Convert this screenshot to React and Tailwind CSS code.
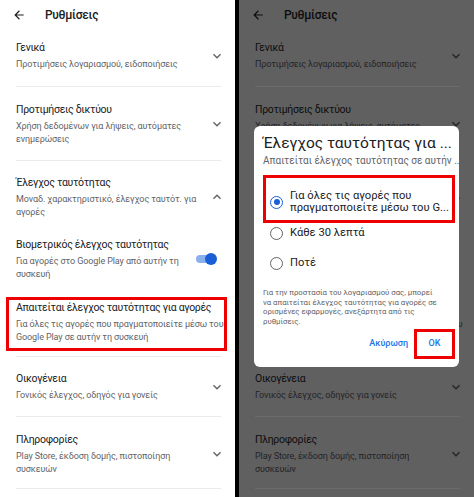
import React from "react";

const items = [
  { title: "Γενικά", sub: "Προτιμήσεις λογαριασμού, ειδοποιήσεις", icon: "down", pt: "pt-[10px]", pb: "pb-[15px]", divider: true },
  { title: "Προτιμήσεις δικτύου", sub: "Χρήση δεδομένων για λήψεις, αυτόματες ενημερώσεις", icon: "down", pt: "pt-[15px]", pb: "pb-[14px]", divider: true },
  { title: "Έλεγχος ταυτότητας", sub: "Μοναδ. χαρακτηριστικό, έλεγχος ταυτότ. για αγορές", icon: "up", pt: "pt-[14px]", pb: "pb-[18px]" },
  { title: "Βιομετρικός έλεγχος ταυτότητας", sub: "Για αγορές στο Google Play από αυτήν τη συσκευή", icon: "toggle", pt: "pt-0", pb: "pb-[19px]" },
  { title: "Απαιτείται έλεγχος ταυτότητας για αγορές", sub: "Για όλες τις αγορές που πραγματοποιείτε μέσω του Google Play σε αυτήν τη συσκευή", icon: null, pt: "pt-0", pb: "pb-[12px]", divider: true, marked: true },
  { title: "Οικογένεια", sub: "Γονικός έλεγχος, οδηγός για γονείς", icon: "down", pt: "pt-[14px]", pb: "pb-[14px]", divider: true },
  { title: "Πληροφορίες", sub: "Play Store, έκδοση δομής, πιστοποίηση συσκευών", icon: "down", pt: "pt-[15px]", pb: "pb-[12px]", divider: true },
];

const Chevron = ({ up, color }) => (
  <svg viewBox="0 0 24 24" className="w-4 h-4" fill={color}>
    {up ? (
      <path d="M12 8l-6 6 1.41 1.41L12 10.83l4.59 4.58L18 14z" />
    ) : (
      <path d="M16.59 8.59 12 13.17 7.41 8.59 6 10l6 6 6-6z" />
    )}
  </svg>
);

const Toggle = ({ dim }) => (
  <div className="relative w-[21px] h-3 flex items-center">
    <div className={`h-2 w-[17px] rounded-full ${dim ? "bg-[#3c4a63]" : "bg-[#8ab0ee]"}`} />
    <div className={`absolute right-0 top-0 w-3 h-3 rounded-full ${dim ? "bg-[#0e2d63]" : "bg-[#1a5fd6]"}`} />
  </div>
);

const SettingsList = ({ dim, showMarks }) => {
  const titleCls = dim ? "text-[#0d0d0e]" : "text-[#202124]";
  const subCls = dim ? "text-[#232427]" : "text-[#5f6368]";
  const iconColor = dim ? "#242527" : "#5f6368";
  const lineCls = dim ? "bg-[#6b6b6b]" : "bg-[#e8eaed]";

  return (
    <div className={`w-[235px] h-[497px] overflow-hidden ${dim ? "bg-[#606060]" : "bg-white"}`}>
      <div className="h-[30px] flex items-center pl-[12px]">
        <svg viewBox="0 0 24 24" className="w-[14px] h-[14px]" fill={dim ? "#0d0d0e" : "#202124"}>
          <path d="M20 11H7.83l5.59-5.59L12 4l-8 8 8 8 1.41-1.41L7.83 13H20v-2z" />
        </svg>
        <span className={`ml-[19px] text-[12px] tracking-[-0.3px] font-medium ${titleCls}`}>Ρυθμίσεις</span>
      </div>

      {items.map((it) => (
        <div key={it.title}>
          <div className={`relative flex items-center pl-4 pr-[10px] ${it.pt} ${it.pb}`}>
            {it.marked && showMarks && (
              <div className="absolute left-[6px] right-[8px] -top-[3px] bottom-[5px] border-[3px] border-[#ee0000]" />
            )}
            <div className={it.icon ? "w-[186px]" : "flex-1"}>
              <div className={`text-[10.5px] tracking-[-0.3px] leading-4 ${titleCls}`}>{it.title}</div>
              <div className={`mt-[2px] text-[9px] tracking-[-0.1px] leading-[13px] ${subCls}`}>{it.sub}</div>
            </div>
            {it.icon && (
              <div className="flex-1 flex justify-end">
                {it.icon === "down" && <Chevron color={iconColor} />}
                {it.icon === "up" && <Chevron up color={iconColor} />}
                {it.icon === "toggle" && (
                  <div className="mr-[8px]">
                    <Toggle dim={dim} />
                  </div>
                )}
              </div>
            )}
          </div>
          {it.divider && <div className={`h-px ml-4 mr-[14px] ${lineCls}`} />}
        </div>
      ))}
    </div>
  );
};

const Radio = ({ checked }) => (
  <div
    className={`w-[13px] h-[13px] rounded-full border-[1.7px] flex items-center justify-center shrink-0 ${
      checked ? "border-[#1a5fd6]" : "border-[#5f6368]"
    }`}
  >
    {checked && <div className="w-[6px] h-[6px] rounded-full bg-[#1a5fd6]" />}
  </div>
);

const Dialog = () => (
  <div className="absolute left-[15px] top-[126px] w-[205px] h-[241px] bg-white rounded-[6px] pl-[9px] pr-[4px] pt-[8px]">
    <div className="text-[15.5px] leading-[18px] text-[#202124] whitespace-nowrap">Έλεγχος ταυτότητας για ...</div>
    <div className="mt-[2px] text-[10px] leading-[13px] text-[#5f6368] whitespace-nowrap">
      Απαιτείται έλεγχος ταυτότητας σε αυτήν ...
    </div>
    <div className="mt-[8px] h-[48px] border-[3px] border-[#ee0000] flex items-center pl-[4px] pt-[6px]">
      <Radio checked />
      <div className="ml-[7px] text-[11.2px] leading-[12px] text-[#202124] whitespace-nowrap">
        Για όλες τις αγορές που
        <br />
        πραγματοποιείτε μέσω του G...
      </div>
    </div>
    <div className="h-[20px] flex items-center pl-[7px]">
      <Radio />
      <span className="ml-[7px] text-[11.2px] text-[#202124]">Κάθε 30 λεπτά</span>
    </div>
    <div className="mt-[10px] h-[20px] flex items-center pl-[7px]">
      <Radio />
      <span className="ml-[7px] text-[11.2px] text-[#202124]">Ποτέ</span>
    </div>
    <div className="mt-[15px] text-[7.8px] leading-[9.7px] text-[#5f6368] whitespace-nowrap">
      Για την προστασία του λογαριασμού σας, μπορεί
      <br />
      να απαιτείται έλεγχος ταυτότητας για αγορές σε
      <br />
      ορισμένες εφαρμογές, ανεξάρτητα από τις
      <br />
      ρυθμίσεις.
    </div>
    <div className="mt-[2px] flex items-center justify-end">
      <span className="text-[9px] font-medium text-[#1a73e8] mr-[6px]">Ακύρωση</span>
      <div className="w-[41px] h-[30px] border-[3px] border-[#ee0000] flex items-center justify-center">
        <span className="text-[9px] font-medium text-[#1a73e8]">OK</span>
      </div>
    </div>
  </div>
);

export default function App() {
  return (
    <div className="w-[474px] h-[497px] flex bg-black overflow-hidden" style={{ fontFamily: "Roboto, 'Noto Sans', sans-serif" }}>
      <SettingsList showMarks />
      <div className="w-1 bg-black" />
      <div className="relative">
        <SettingsList dim />
        <Dialog />
      </div>
    </div>
  );
}
